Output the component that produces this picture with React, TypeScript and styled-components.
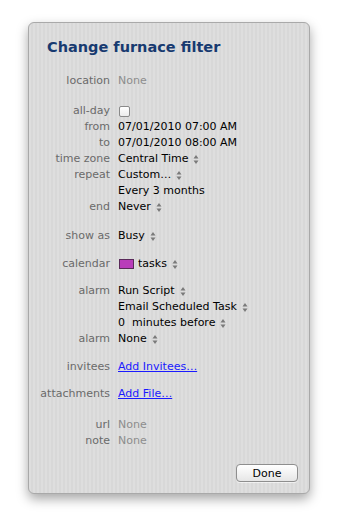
import React from 'react';
import styled, { createGlobalStyle } from 'styled-components';

const GlobalStyle = createGlobalStyle`
  html, body {
    margin: 0;
    padding: 0;
    background: #ffffff;
  }
  body {
    font-family: "DejaVu Sans", "Liberation Sans", sans-serif;
    font-size: 11px;
  }
`;

const Page = styled.div`
  padding: 22px 0 0 28px;
  width: 340px;
  height: 529px;
  box-sizing: border-box;
`;

const Panel = styled.div`
  width: 282px;
  height: 472px;
  box-sizing: border-box;
  border: 1px solid #a9a9a9;
  border-radius: 6px;
  background-color: #dbdbdb;
  background-image: repeating-linear-gradient(
    90deg,
    #dedede 0px,
    #dedede 2px,
    #d8d8d8 2px,
    #d8d8d8 4px
  );
  box-shadow: 0 5px 12px rgba(0, 0, 0, 0.35);
  display: flex;
  flex-direction: column;
  padding: 14px 11px 11px 0;
`;

const Title = styled.h1`
  margin: 0 0 0 18px;
  font-family: "DejaVu Sans", "Liberation Sans", sans-serif;
  font-weight: bold;
  font-size: 14.5px;
  line-height: 20px;
  color: #173a70;
`;

const Section = styled.div<{ $gap: number }>`
  display: grid;
  grid-template-columns: 81px 1fr;
  column-gap: 8px;
  grid-auto-rows: 16px;
  margin-top: ${(p) => p.$gap}px;
`;

const Label = styled.div`
  text-align: right;
  color: #6a6a6a;
  line-height: 16px;
  white-space: nowrap;
`;

const Value = styled.div<{ $muted?: boolean }>`
  grid-column: 2;
  display: flex;
  align-items: center;
  gap: 4px;
  color: ${(p) => (p.$muted ? '#8d8d8d' : '#000000')};
  line-height: 16px;
  white-space: nowrap;
`;

const Link = styled.a`
  color: #1a1aff;
  text-decoration: underline;
  cursor: pointer;
`;

const Checkbox = styled.span`
  display: inline-block;
  width: 9px;
  height: 9px;
  border: 1px solid #8a8a8a;
  border-radius: 2px;
  background: linear-gradient(#ffffff, #ececec);
  margin-left: 1px;
`;

const Swatch = styled.span`
  display: inline-block;
  width: 13px;
  height: 8px;
  border: 1px solid #5a2a5a;
  background: #b93cba;
  margin-left: 1px;
`;

const Footer = styled.div`
  margin-top: auto;
  display: flex;
  justify-content: flex-end;
`;

const Button = styled.button`
  width: 62px;
  height: 18px;
  padding: 0;
  border: 1px solid #8e8e8e;
  border-radius: 4px;
  background: linear-gradient(#ffffff, #f0f0f0 60%, #e6e6e6);
  font-family: "DejaVu Sans", "Liberation Sans", sans-serif;
  font-size: 11px;
  color: #000;
  box-shadow: 0 1px 0 rgba(255, 255, 255, 0.6);
`;

const Stepper = () => (
  <svg width="6" height="11" viewBox="0 0 6 11" style={{ marginLeft: 1 }}>
    <path d="M3 1 L5.5 4.5 H0.5 Z" fill="#7a7a7a" />
    <path d="M3 10 L5.5 6.5 H0.5 Z" fill="#7a7a7a" />
  </svg>
);

type Row = { label?: string; value: React.ReactNode; muted?: boolean };

const Rows = ({ rows }: { rows: Row[] }) => (
  <>
    {rows.map((r, i) => (
      <React.Fragment key={i}>
        {r.label !== undefined ? <Label>{r.label}</Label> : <span />}
        <Value $muted={r.muted}>{r.value}</Value>
      </React.Fragment>
    ))}
  </>
);

const App = () => {
  return (
    <Page>
      <GlobalStyle />
      <Panel>
        <Title>Change furnace filter</Title>

        <Section $gap={16}>
          <Rows rows={[{ label: 'location', value: 'None', muted: true }]} />
        </Section>

        <Section $gap={14}>
          <Rows
            rows={[
              { label: 'all-day', value: <Checkbox /> },
              { label: 'from', value: '07/01/2010 07:00 AM' },
              { label: 'to', value: '07/01/2010 08:00 AM' },
              { label: 'time zone', value: <>Central Time <Stepper /></> },
              { label: 'repeat', value: <>Custom… <Stepper /></> },
              { value: 'Every 3 months' },
              { label: 'end', value: <>Never <Stepper /></> },
            ]}
          />
        </Section>

        <Section $gap={13}>
          <Rows rows={[{ label: 'show as', value: <>Busy <Stepper /></> }]} />
        </Section>

        <Section $gap={12}>
          <Rows
            rows={[
              { label: 'calendar', value: <><Swatch /> tasks <Stepper /></> },
            ]}
          />
        </Section>

        <Section $gap={11}>
          <Rows
            rows={[
              { label: 'alarm', value: <>Run Script <Stepper /></> },
              { value: <>Email Scheduled Task <Stepper /></> },
              { value: <>0&nbsp; minutes before <Stepper /></> },
              { label: 'alarm', value: <>None <Stepper /></> },
            ]}
          />
        </Section>

        <Section $gap={12}>
          <Rows rows={[{ label: 'invitees', value: <Link>Add Invitees…</Link> }]} />
        </Section>

        <Section $gap={11}>
          <Rows rows={[{ label: 'attachments', value: <Link>Add File…</Link> }]} />
        </Section>

        <Section $gap={15}>
          <Rows
            rows={[
              { label: 'url', value: 'None', muted: true },
              { label: 'note', value: 'None', muted: true },
            ]}
          />
        </Section>

        <Footer>
          <Button>Done</Button>
        </Footer>
      </Panel>
    </Page>
  );
};

export default App;
